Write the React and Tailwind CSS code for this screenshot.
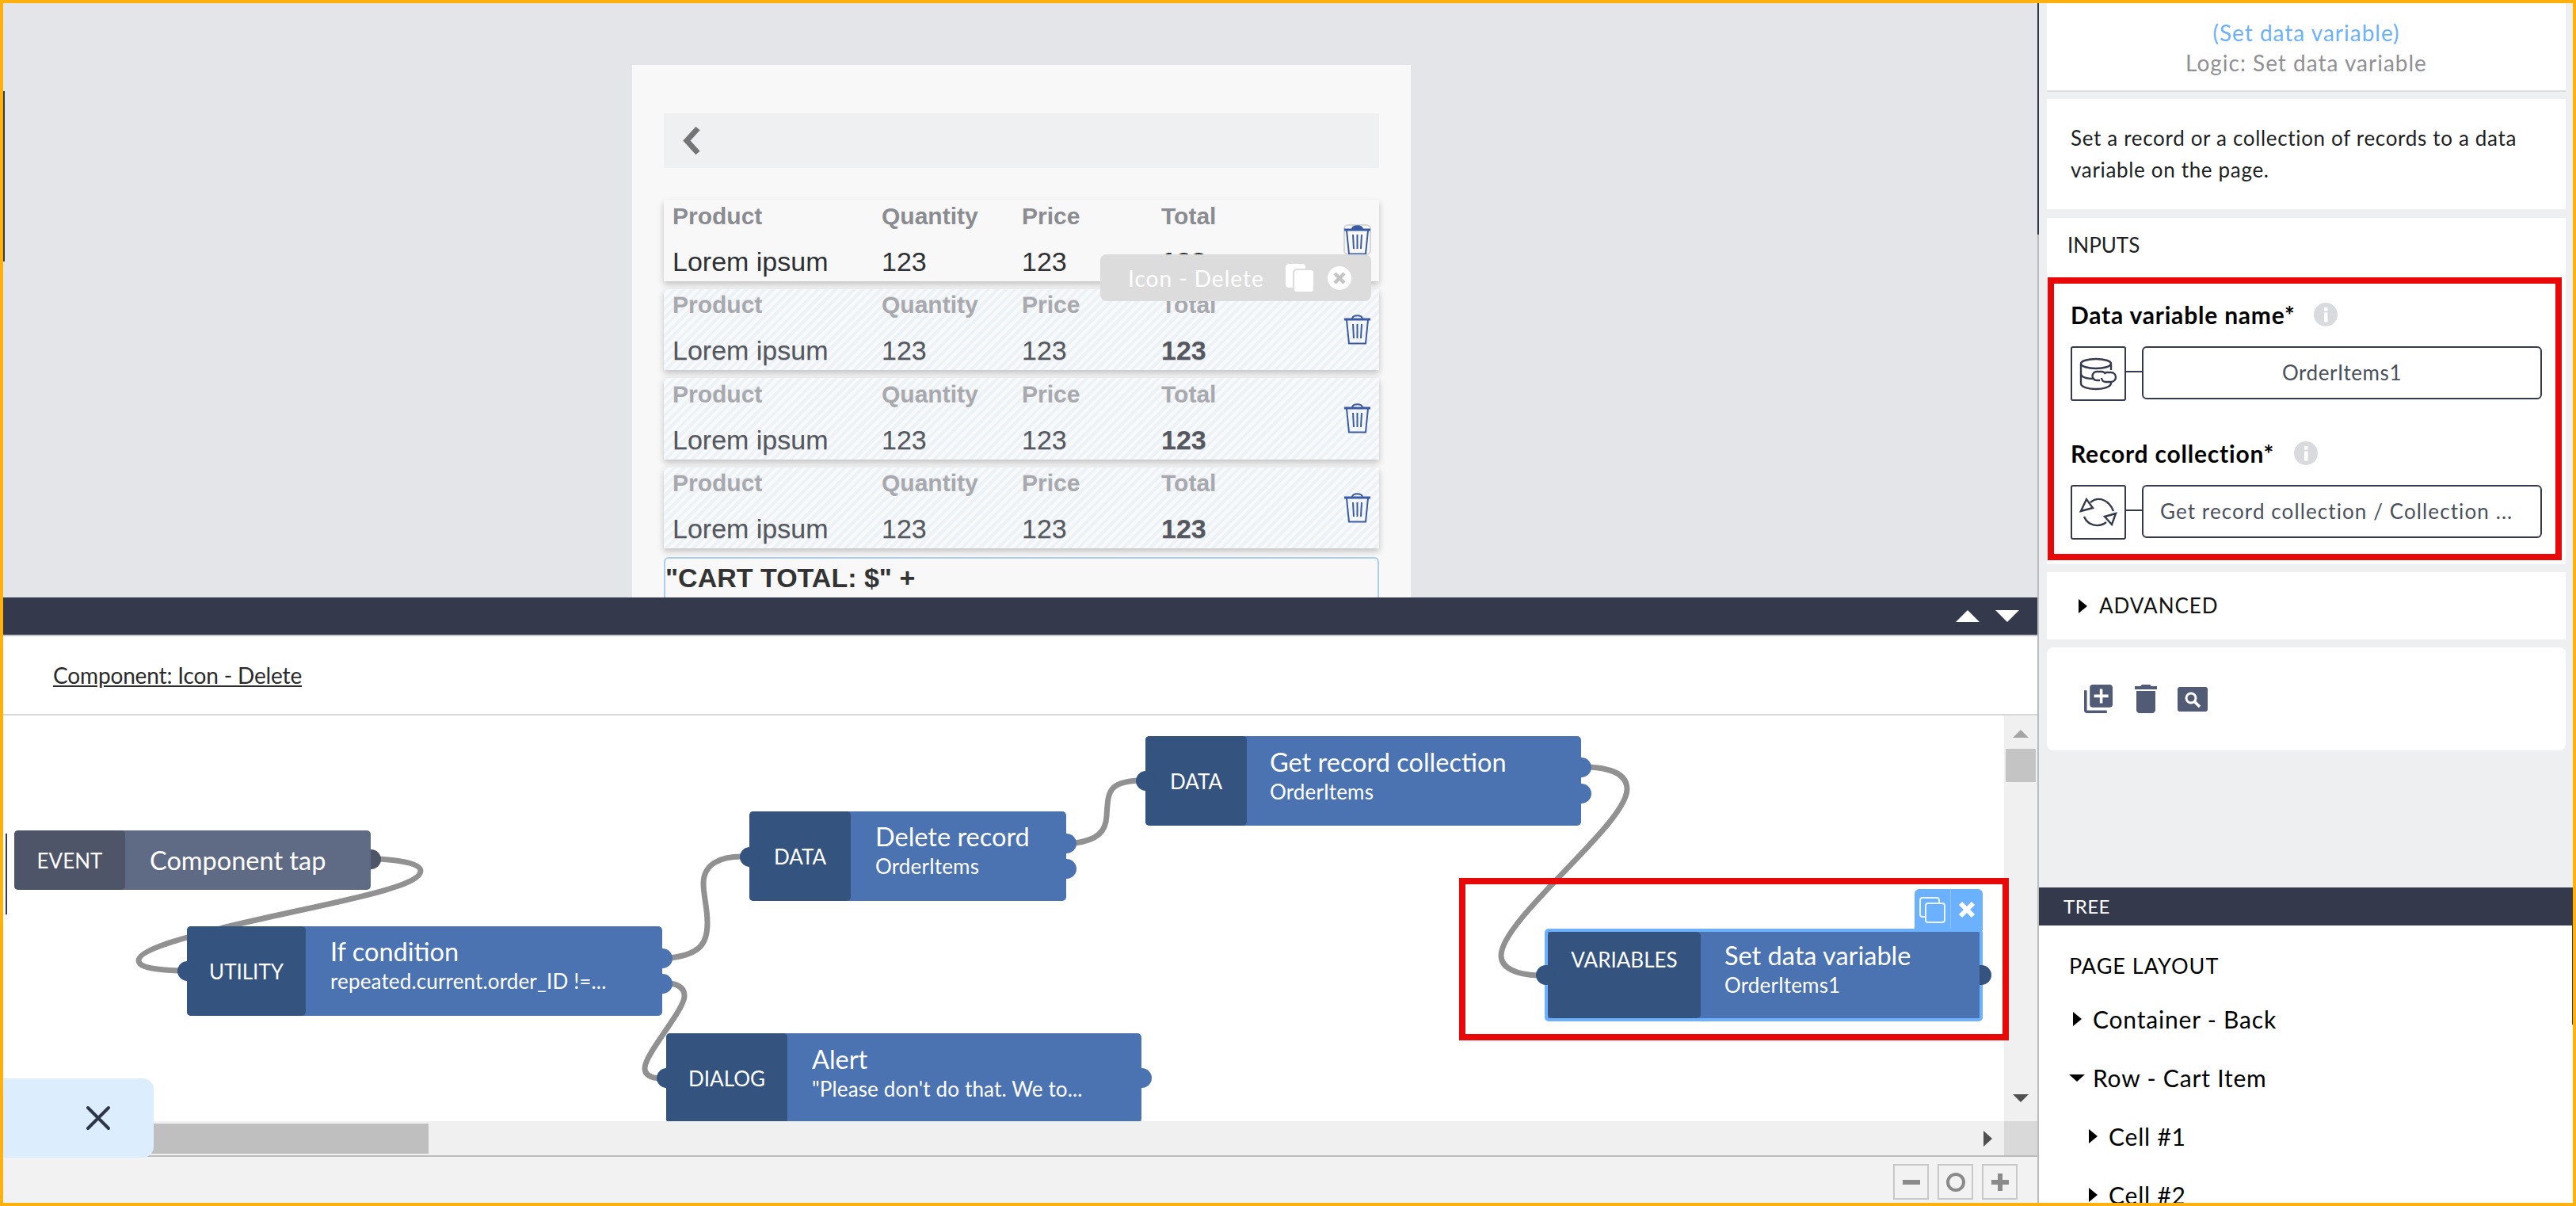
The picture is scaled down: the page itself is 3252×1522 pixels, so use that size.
import React from "react";

const rowCols = "grid grid-cols-[264px_177px_176px_1fr] flex-1";

// half round connectors on the blocks
const leftPort = "w-[25px] h-[25px] rounded-full left-[-12px]";
const rightPort = "w-[13px] h-[25px] rounded-r-full right-[-13px]";

const TrashOutline = ({ active }) => (
  <div className={active ? "w-[35px] h-[39px] border-2 border-[#d6d6d6] rounded-[6px] shrink-0" : "w-[35px] h-[39px] shrink-0"}>
    <svg width="35" height="39" viewBox="0 0 35 39" fill="none" stroke="#3a5ba3" strokeWidth="2" className={active ? "-m-[2px]" : ""}>
      <path d="M11 6C12 1 23 1 24 6" fill={active ? "#3a5ba3" : "none"} />
      <path d="M1 7H34" strokeWidth="3" />
      <path d="M4 8L7 37.5H28L31 8" />
      <path d="M12 13L13 31M17.5 13V31M23 13L22 31" />
    </svg>
  </div>
);

// one cart row on the preview page
const CartRow = ({ ghost, hClass, active }) => {
  const head = ghost
    ? "text-[#a7a9ae] [text-shadow:0_1px_1px_#fff,0_-1px_0_#d5d7da]"
    : "text-[#8a8c91]";
  const body = ghost ? "text-[#55585e] [text-shadow:0_1px_0_#c9cbd0]" : "text-[#2f3033]";
  return (
    <div
      className={`${hClass} pl-[11px] pr-[10px] pb-[2px] flex items-center shadow-[0_4px_8px_rgba(0,0,0,0.22)] ${
        ghost
          ? "bg-[repeating-linear-gradient(135deg,#edf2f6_0px,#edf2f6_4px,#f8f9fa_4px,#f8f9fa_8px)]"
          : "bg-[#f8f8f8]"
      }`}
    >
      <div className={rowCols}>
        <div className={`text-[30px] leading-[34px] font-bold ${head}`}>Product</div>
        <div className={`text-[30px] leading-[34px] font-bold ${head}`}>Quantity</div>
        <div className={`text-[30px] leading-[34px] font-bold ${head}`}>Price</div>
        <div className={`text-[30px] leading-[34px] font-bold ${head}`}>Total</div>
        <div className={`mt-[20px] text-[34px] leading-[40px] ${body}`}>Lorem ipsum</div>
        <div className={`mt-[20px] text-[34px] leading-[40px] ${body}`}>123</div>
        <div className={`mt-[20px] text-[34px] leading-[40px] ${body}`}>123</div>
        <div className={`mt-[20px] text-[34px] leading-[40px] font-bold ${body}`}>123</div>
      </div>
      <TrashOutline active={active} />
    </div>
  );
};

// a block of the logic canvas
const Node = ({ pos, label, labelW, labelClass, title, sub, textClass, colors, ports, selected }) => (
  <div className={`absolute ${pos} ${colors.body} rounded-[5px] flex ${selected ? "border-4 border-[#6bb1fd]" : ""}`}>
    <div className={`${labelW} ${colors.label} rounded-[5px] flex justify-center ${labelClass || "items-center"} text-white text-[26px] leading-[30px] shrink-0`}>
      {label}
    </div>
    <div className={`flex flex-col text-white ${textClass}`}>
      <div className="text-[32.5px] leading-[38px] whitespace-nowrap">{title}</div>
      {sub && <div className="mt-[3px] text-[26px] leading-[30px] tracking-[0.15px] whitespace-nowrap">{sub}</div>}
    </div>
    {ports.map((p) => (
      <div key={p} className={`absolute ${p}`} />
    ))}
  </div>
);

const blue = { body: "bg-[#4b73b1]", label: "bg-[#34537f]" };

const Caret = ({ open, className }) =>
  open ? (
    <svg width="20" height="9" viewBox="0 0 20 9" className={className}>
      <path d="M0 0H20L10 9Z" fill="#000" />
    </svg>
  ) : (
    <svg width="11" height="18" viewBox="0 0 11 18" className={className}>
      <path d="M0 0L11 9L0 18Z" fill="#000" />
    </svg>
  );

const InfoDot = ({ className }) => (
  <svg width="30" height="30" viewBox="0 0 30 30" className={className}>
    <circle cx="15" cy="15" r="15" fill="#d9dade" />
    <rect x="13" y="6" width="4.5" height="4.5" fill="#fff" />
    <rect x="13" y="12.5" width="4.5" height="12" fill="#fff" />
  </svg>
);

const InputRow = ({ icon, value, valueClass }) => (
  <div className="flex items-start">
    <div className="w-[70px] h-[69px] border-2 border-[#343a4b] rounded-[3px] shrink-0">{icon}</div>
    <div className="w-[20px] h-[2px] mt-[31px] bg-[#343a4b] shrink-0" />
    <div className={`w-[505px] h-[67px] border-2 border-[#343a4b] rounded-[6px] flex items-center text-[26px] text-[#4a4f5c] ${valueClass}`}>
      {value}
    </div>
  </div>
);

const TreeRow = ({ children, indent }) => (
  <div className={`h-[74px] flex items-center text-[30px] tracking-[0.8px] text-black ${indent}`}>
    {children}
  </div>
);

export default function App() {
  return (
    <div className="w-[3252px] h-[1522px] box-border border-4 border-[#fdb00e] flex overflow-hidden bg-white font-['Lato',sans-serif]">
      {/* LEFT: preview + logic canvas */}
      <div className="relative w-[2568px] h-full flex flex-col shrink-0">
        <div className="h-[750px] bg-[#e3e5e8] flex overflow-hidden shrink-0 font-['Liberation_Sans',Arial,sans-serif]">
          <div className="w-[2px] h-[215px] mt-[111px] bg-[#343a4b] shrink-0" />
          <div className="relative ml-[792px] mt-[78px] w-[983px] h-[672px] bg-[#f8f8f8] px-[40px] pt-[61px] shrink-0 overflow-hidden">
            <div className="h-[69px] bg-[#eff0f2] flex items-center pl-[24px]">
              <svg width="24" height="37" viewBox="0 0 24 37">
                <path d="M19 3L5 18.5L19 34" fill="none" stroke="#757575" strokeWidth="7" />
              </svg>
            </div>
            <div className="mt-[40px] flex flex-col gap-[10px]">
              <CartRow hClass="h-[103px]" active />
              <CartRow hClass="h-[102px]" ghost />
              <CartRow hClass="h-[103px]" ghost />
              <CartRow hClass="h-[102px]" ghost />
            </div>
            <div className="mt-[11px] h-[80px] border-2 border-[#a9cdf5] rounded-[6px] text-[34px] leading-[48px] font-bold text-[#333]">
              "CART TOTAL: $" +
            </div>
            {/* hover tooltip of the selected icon */}
            <div className="absolute left-[591px] top-[239px] w-[342px] h-[59px] bg-[#dcdcdc] rounded-[8px] flex items-center pl-[35px] text-white text-[28px] tracking-[1px] font-['Lato',sans-serif]">
              <span className="w-[199px] shrink-0 whitespace-nowrap">Icon - Delete</span>
              <svg width="36" height="36" viewBox="0 0 36 36" fill="#fff" className="shrink-0">
                <rect x="0" y="0" width="25" height="30" rx="4" />
                <rect x="10" y="7" width="26" height="29" rx="4" stroke="#dcdcdc" strokeWidth="2" />
              </svg>
              <svg width="30" height="30" viewBox="0 0 30 30" className="ml-[17px] shrink-0">
                <circle cx="15" cy="15" r="15" fill="#fff" />
                <path d="M9 9L21 21M21 9L9 21" stroke="#c4c4c4" strokeWidth="4.5" />
              </svg>
            </div>
          </div>
        </div>

        <div className="h-[47px] bg-[#343a4b] flex items-center justify-end pr-[23px] gap-[20px] shrink-0">
          <svg width="30" height="15" viewBox="0 0 30 15"><path d="M0 15L15 0L30 15Z" fill="#fff" /></svg>
          <svg width="30" height="15" viewBox="0 0 30 15"><path d="M0 0H30L15 15Z" fill="#fff" /></svg>
        </div>
        <div className="h-[102px] box-border border-t-2 border-t-[#c8c8c8] border-b-2 border-b-[#d8d8d8] flex items-center pl-[63px] text-[28px] tracking-[-0.15px] text-[#2a2a2a] shrink-0">
          <span className="underline">Component: Icon - Delete</span>
        </div>

        <div className="relative h-[512px] flex shrink-0">
          <div className="relative w-[2526px] h-full overflow-hidden bg-white">
            <div className="absolute left-[3px] top-[149px] w-[2px] h-[102px] bg-[#343a4b]" />
            <svg width="2526" height="512" viewBox="4 903 2526 512" fill="none" stroke="#919191" strokeWidth="7" className="absolute left-0 top-0">
              <path d="M478 1084C512 1086 531 1091 531 1099C531 1122 400 1142 285 1170C235 1183 175 1198 175 1212C175 1222 200 1224 226 1225" />
              <path d="M846 1209C885 1204 893 1190 893 1165C893 1145 888 1130 888 1115C888 1090 910 1081 936 1081" />
              <path d="M846 1241C860 1243 864 1250 864 1257C864 1275 814 1330 814 1348C814 1356 820 1360 832 1361" />
              <path d="M1357 1064C1385 1060 1396 1050 1397 1030C1399 1000 1398 987 1437 985" />
              <path d="M2007 968C2040 970 2054 980 2054 996C2054 1040 1895 1160 1895 1206C1895 1222 1915 1230 1941 1231" />
            </svg>
            <Node
              pos="left-[14px] top-[145px] w-[450px] h-[75px]"
              label="EVENT"
              labelW="w-[140px]"
              title="Component tap"
              textClass="pl-[31px] justify-center"
              colors={{ body: "bg-[#5f6a85]", label: "bg-[#4e5569]" }}
              ports={[`bg-[#4e5569] ${rightPort} top-[24px]`]}
            />
            <Node
              pos="left-[232px] top-[266px] w-[600px] h-[113px]"
              label="UTILITY"
              labelW="w-[150px]"
              title="If condition"
              sub="repeated.current.order_ID !=..."
              textClass="pl-[31px] pt-[13px]"
              colors={blue}
              ports={[`bg-[#34537f] ${leftPort} top-[44px]`, `bg-[#4b73b1] ${rightPort} top-[28px]`, `bg-[#4b73b1] ${rightPort} top-[60px]`]}
            />
            <Node
              pos="left-[942px] top-[121px] w-[400px] h-[113px]"
              label="DATA"
              labelW="w-[128px]"
              title="Delete record"
              sub="OrderItems"
              textClass="pl-[31px] pt-[13px]"
              colors={blue}
              ports={[`bg-[#34537f] ${leftPort} top-[45px]`, `bg-[#4b73b1] ${rightPort} top-[28px]`, `bg-[#4b73b1] ${rightPort} top-[60px]`]}
            />
            <Node
              pos="left-[1442px] top-[26px] w-[550px] h-[113px]"
              label="DATA"
              labelW="w-[128px]"
              title="Get record collection"
              sub="OrderItems"
              textClass="pl-[29px] pt-[14px]"
              colors={blue}
              ports={[`bg-[#34537f] ${leftPort} top-[44px]`, `bg-[#4b73b1] ${rightPort} top-[27px]`, `bg-[#4b73b1] ${rightPort} top-[60px]`]}
            />
            <Node
              pos="left-[837px] top-[401px] w-[600px] h-[113px]"
              label="DIALOG"
              labelW="w-[153px]"
              title="Alert"
              sub={'"Please don\'t do that. We to...'}
              textClass="pl-[31px] pt-[14px]"
              colors={blue}
              ports={[`bg-[#34537f] ${leftPort} top-[44px]`, `bg-[#4b73b1] ${rightPort} top-[44px]`]}
            />
            <div className="absolute left-[2413px] top-[219px] w-[86px] h-[52px] bg-[#6bb1fd] rounded-t-[6px] flex">
              <div className="w-[46px] h-full border-r border-r-[#8ec3fd] flex items-center justify-center">
                <svg width="33" height="33" viewBox="0 0 33 33" fill="none" stroke="#eaf4ff" strokeWidth="2">
                  <rect x="1" y="1" width="24" height="24" rx="3" />
                  <rect x="8" y="8" width="24" height="24" rx="3" fill="#6bb1fd" />
                </svg>
              </div>
              <div className="flex-1 flex items-center justify-center">
                <svg width="22" height="22" viewBox="0 0 22 22">
                  <path d="M3 3L19 19M19 3L3 19" stroke="#fff" strokeWidth="6" />
                </svg>
              </div>
            </div>
            <Node
              pos="left-[1946px] top-[269px] w-[553px] h-[117px]"
              label="VARIABLES"
              labelW="w-[193px]"
              labelClass="items-start pt-[20px]"
              title="Set data variable"
              sub="OrderItems1"
              textClass="pl-[30px] pt-[11px]"
              colors={blue}
              selected
              ports={["bg-[#34537f] w-[25px] h-[25px] rounded-full left-[-15px] top-[42px]", "bg-[#34537f] w-[15px] h-[25px] rounded-r-full right-[-15px] top-[42px]"]}
            />
          </div>
          <div className="w-[42px] h-full bg-[#f0f0f0] flex flex-col items-center shrink-0">
            <svg width="20" height="10" viewBox="0 0 20 10" className="mt-[18px]"><path d="M0 10L10 0L20 10Z" fill="#a5a5a5" /></svg>
            <div className="mt-[14px] w-[38px] h-[42px] bg-[#c4c4c4]" />
            <svg width="20" height="10" viewBox="0 0 20 10" className="mt-[394px]"><path d="M0 0H20L10 10Z" fill="#505050" /></svg>
          </div>
          {/* marks the new block */}
          <div className="absolute left-[1838px] top-[205px] w-[694px] h-[205px] border-8 border-[#e80808]" />
        </div>

        <div className="h-[45px] box-border border-b-2 border-b-[#bbbbbb] flex shrink-0">
          <div className="flex-1 bg-[#f0f0f0] flex items-center justify-between pr-[15px]">
            <div className="ml-[20px] w-[517px] h-[38px] bg-[#bfbfbf]" />
            <svg width="11" height="20" viewBox="0 0 11 20"><path d="M0 0L11 10L0 20Z" fill="#505050" /></svg>
          </div>
          <div className="w-[42px] bg-[#d9d9d9]" />
        </div>

        <div className="flex-1 bg-[#f2f2f2] flex justify-end gap-[11px] pr-[25px] pt-[9px]">
          <div className="w-[45px] h-[45px] border-2 border-[#c8c8c8] flex items-center justify-center">
            <svg width="22" height="6" viewBox="0 0 22 6"><rect width="22" height="6" fill="#8a8a8a" /></svg>
          </div>
          <div className="w-[45px] h-[45px] border-2 border-[#c8c8c8] flex items-center justify-center">
            <svg width="24" height="24" viewBox="0 0 24 24"><circle cx="12" cy="12" r="10" fill="none" stroke="#8a8a8a" strokeWidth="4" /></svg>
          </div>
          <div className="w-[45px] h-[45px] border-2 border-[#c8c8c8] flex items-center justify-center">
            <svg width="22" height="22" viewBox="0 0 22 22"><path d="M8 0H14V8H22V14H14V22H8V14H0V8H8Z" fill="#8a8a8a" /></svg>
          </div>
        </div>

        {/* floating close tab */}
        <div className="absolute left-0 bottom-[57px] w-[190px] h-[100px] bg-[#dcedfd] rounded-r-[14px] flex items-center justify-center pl-[50px]">
          <svg width="32" height="32" viewBox="0 0 32 32">
            <path d="M3 3L29 29M29 3L3 29" stroke="#2d3748" strokeWidth="4" strokeLinecap="round" />
          </svg>
        </div>
      </div>

      {/* RIGHT: block properties + tree */}
      <div className="flex-1 h-full flex">
        <div className="w-[2px] h-full flex flex-col shrink-0">
          <div className="h-[292px] bg-[#343a4b]" />
          <div className="flex-1 bg-[#bdbdbd]" />
        </div>
        <div className="flex-1 h-full flex flex-col bg-[#eeeff1]">
          <div className="flex-1 pl-[10px] pr-[9px]">
            <div className="h-[112px] box-border border-b-2 border-b-[#dcdddf] bg-white flex flex-col items-center pt-[18px]">
              <div className="text-[28px] leading-[38px] text-[#6bb1fd] tracking-[1px]">(Set data variable)</div>
              <div className="text-[28px] leading-[38px] text-[#8f9093] tracking-[1px]">Logic: Set data variable</div>
            </div>
            <div className="mt-[9px] h-[139px] bg-white pl-[30px] pt-[29px] text-[26px] leading-[40px] text-[#1d1f24] tracking-[0.67px]">
              Set a record or a collection of records to a data
              <br />
              variable on the page.
            </div>
            <div className="mt-[11px] bg-white pb-[5px]">
              <div className="h-[75px] pl-[26px] pt-[17px] text-[26px] leading-[34px] text-[#1d1f24]">INPUTS</div>
              <div className="ml-[1px] w-[649px] h-[357px] box-border border-8 border-[#e80808] pl-[21px] pt-[21px]">
                <div className="flex items-center h-[36px] text-[30px] tracking-[0.8px] font-bold text-black">
                  Data variable name*
                  <InfoDot className="ml-[24px]" />
                </div>
                <div className="mt-[22px]">
                  <InputRow
                    value="OrderItems1"
                    valueClass="justify-center tracking-[0.6px]"
                    icon={
                      <svg width="66" height="65" viewBox="2 2 66 65" fill="none" stroke="#343a4b" strokeWidth="2.4">
                        <ellipse cx="32" cy="22" rx="19" ry="6" />
                        <path d="M13 22V47C13 52 24 54 32 54C40 54 50 52 51 47V45" />
                        <path d="M13 35C14 40 22 41 30 41" />
                        <path d="M51 22V30" />
                        <path d="M37 43H33A5.5 5.5 0 0 1 33 32H39A5.5 5.5 0 0 1 44 35" />
                        <path d="M44 33H51A6 6 0 0 1 51 45H44A5.5 5.5 0 0 1 39 40" />
                      </svg>
                    }
                  />
                </div>
                <div className="mt-[48px] flex items-center h-[36px] text-[30px] tracking-[0.8px] font-bold text-black">
                  Record collection*
                  <InfoDot className="ml-[25px]" />
                </div>
                <div className="mt-[22px]">
                  <InputRow
                    value="Get record collection / Collection ..."
                    valueClass="pl-[21px] tracking-[1.1px]"
                    icon={
                      <svg width="66" height="65" viewBox="2 2 66 65" fill="none" stroke="#343a4b" strokeWidth="2.4">
                        <path d="M25 22C36 13 49 20 54 33" />
                        <path d="M17 40C22 52 36 54 45 47" />
                        <path d="M13 33L28 29L20 18Z" />
                        <path d="M57 36L43 40L52 50Z" />
                      </svg>
                    }
                  />
                </div>
              </div>
            </div>
            <div className="mt-[10px] h-[85px] bg-white flex items-center pl-[40px] text-[26px] tracking-[1px] text-[#111]">
              <Caret />
              <span className="ml-[15px]">ADVANCED</span>
            </div>
            <div className="mt-[10px] h-[130px] bg-white rounded-[8px] flex items-center pl-[47px]">
              <svg width="36" height="36" viewBox="2 2 20 20" fill="#525b75">
                <path d="M4 6H2v14c0 1.1.9 2 2 2h14v-2H4V6zm16-4H8c-1.1 0-2 .9-2 2v12c0 1.1.9 2 2 2h12c1.1 0 2-.9 2-2V4c0-1.1-.9-2-2-2zm-1 9h-4v4h-2v-4H9V9h4V5h2v4h4v2z" />
              </svg>
              <svg width="28" height="36" viewBox="5 3 14 18" fill="#525b75" className="ml-[28px]">
                <path d="M6 19c0 1.1.9 2 2 2h8c1.1 0 2-.9 2-2V7H6v12zM19 4h-3.5l-1-1h-5l-1 1H5v2h14V4z" />
              </svg>
              <svg width="38" height="31" viewBox="0 0 38 31" className="ml-[26px]">
                <rect width="38" height="31" rx="3" fill="#525b75" />
                <circle cx="17" cy="14" r="6" fill="none" stroke="#fff" strokeWidth="3" />
                <path d="M21.5 18.5L28 25" stroke="#fff" strokeWidth="3.5" />
              </svg>
            </div>
          </div>

          <div className="h-[48px] bg-[#343a4b] flex items-center pl-[31px] text-[24px] tracking-[0.5px] text-white shrink-0">TREE</div>
          <div className="h-[350px] bg-white flex shrink-0">
            <div className="flex-1 overflow-hidden pl-[38px] pt-[34px]">
              <div className="h-[34px] text-[27px] leading-[34px] tracking-[1px] text-black mb-[13px]">PAGE LAYOUT</div>
              <TreeRow indent="pl-[5px]">
                <Caret />
                <span className="ml-[14px]">Container - Back</span>
              </TreeRow>
              <TreeRow>
                <Caret open />
                <span className="ml-[10px]">Row - Cart Item</span>
              </TreeRow>
              <TreeRow indent="pl-[25px]">
                <Caret />
                <span className="ml-[14px]">Cell #1</span>
              </TreeRow>
              <TreeRow indent="pl-[25px]">
                <Caret />
                <span className="ml-[14px]">Cell #2</span>
              </TreeRow>
            </div>
            <div className="w-[1px] h-[125px] bg-[#343a4b] shrink-0" />
          </div>
        </div>
      </div>
    </div>
  );
}
